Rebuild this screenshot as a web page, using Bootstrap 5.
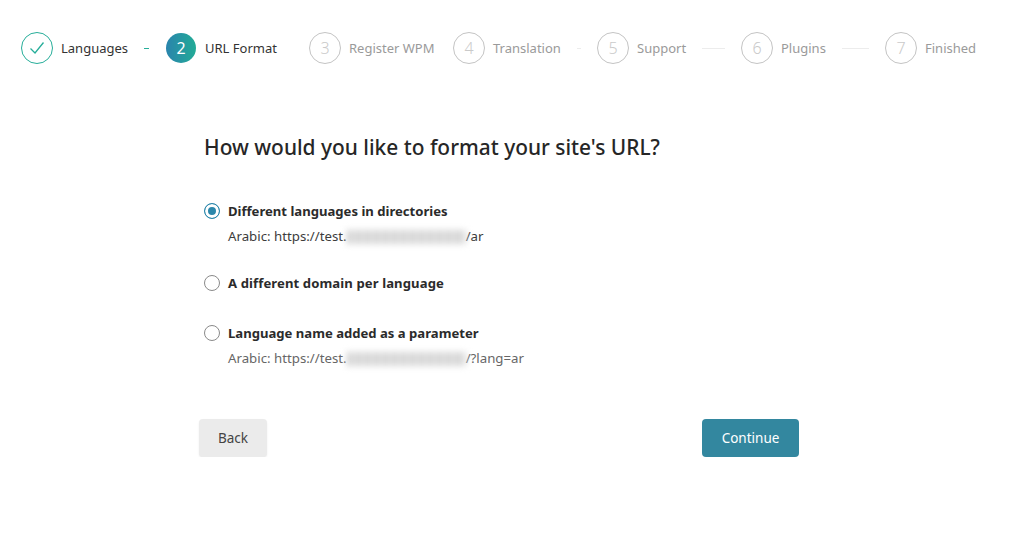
<!DOCTYPE html>
<html lang="en">
<head>
<meta charset="utf-8">
<title>URL Format</title>
<link href="https://cdn.jsdelivr.net/npm/bootstrap@5.3.0/dist/css/bootstrap.min.css" rel="stylesheet">
<style>
html,body{background:#fff;}
body{font-family:"Noto Sans","Open Sans",sans-serif;font-size:14px;color:#2b2b2b;overflow:hidden;}
.stepper{padding:32px 0 0 21px;height:64px;box-sizing:content-box;}
.step-item{flex:0 0 144px;min-width:0;}
.step-item:last-child{flex:0 0 auto;}
.step-dot{flex:0 0 32px;width:32px;height:32px;border-radius:50%;border:1px solid #c4c4c4;color:#cacaca;font-size:16px;font-weight:300;line-height:1;}
.step-done{border-color:#27ae9a;}
.step-now{border-color:transparent;background:linear-gradient(90deg,#2a84ad,#22ab96);background-clip:padding-box;color:#fff;font-weight:400;}
.step-name{margin-left:8px;padding-top:2px;color:#9a9a9a;font-size:13px;white-space:nowrap;}
.step-on{color:#333;}
.step-line{height:1px;background:#ececec;margin:0 16px;min-width:0;}
.line-on{background:#27ae9a;}
.panel{width:600px;margin:0 auto 0 199px;padding-top:35px;}
.panel-title{font-size:20.9px;font-weight:500;color:#262626;margin:0 0 0 5px;line-height:32px;}
.opts{margin:38px 0 0 5px;}
.opt{min-height:0;padding-left:24px;margin:0;}
.opt .form-check-input{width:16px;height:16px;margin:2px 0 0 -24px;border:1px solid #8a8a8a;box-shadow:none;}
.opt .form-check-input:checked{border-color:#2b87ab;background-color:#2b87ab;background-image:none;box-shadow:inset 0 0 0 3px #fff;}
.opt-name{font-weight:700;font-size:13.1px;color:#2b2b2b;line-height:20px;display:block;}
.opt-name-wide{letter-spacing:.1px;}
.opt-desc{font-size:13.25px;color:#3c3c3c;line-height:20px;margin-top:5px;white-space:nowrap;}
.opt-desc-muted{color:#666;}
.opt-gap{margin-top:27px;}
.opt-gap-b{margin-top:30px;}
.smudge{display:inline-block;width:119px;height:14px;vertical-align:-3px;filter:blur(3px);background:repeating-linear-gradient(90deg,#cfcfcf 0 5px,#e8e8e8 5px 9px);}
.actions{margin-top:51px;}
.btn-back,.btn-go{font-size:13.5px;height:38px;padding:0;border:0;border-radius:4px;line-height:38px;}
.btn-back{width:68px;background:#ebebeb;color:#444;box-shadow:0 1px 2px rgba(0,0,0,.08);}
.btn-go{width:97px;background:#33879f;color:#fff;}
.btn-back:hover{background:#e2e2e2;color:#444;}
.btn-go:hover{background:#2d7a90;color:#fff;}
</style>
</head>
<body>
<div class="stepper d-flex align-items-start">
  <div class="step-item d-flex align-items-center">
    <div class="step-dot step-done d-flex align-items-center justify-content-center">
      <svg width="16" height="14" viewBox="0 0 16 14" fill="none" stroke="#27ae9a" stroke-width="1.3"><path d="M1.5 7.5 L6 12 L14.5 1.5"/></svg>
    </div>
    <span class="step-name step-on">Languages</span>
    <div class="step-line line-on flex-grow-1"></div>
  </div>
  <div class="step-item d-flex align-items-center">
    <div class="step-dot step-now d-flex align-items-center justify-content-center">2</div>
    <span class="step-name step-on">URL Format</span>
  </div>
  <div class="step-item d-flex align-items-center">
    <div class="step-dot d-flex align-items-center justify-content-center">3</div>
    <span class="step-name">Register WPM</span>
  </div>
  <div class="step-item d-flex align-items-center">
    <div class="step-dot d-flex align-items-center justify-content-center">4</div>
    <span class="step-name">Translation</span>
    <div class="step-line flex-grow-1"></div>
  </div>
  <div class="step-item d-flex align-items-center">
    <div class="step-dot d-flex align-items-center justify-content-center">5</div>
    <span class="step-name">Support</span>
    <div class="step-line flex-grow-1"></div>
  </div>
  <div class="step-item d-flex align-items-center">
    <div class="step-dot d-flex align-items-center justify-content-center">6</div>
    <span class="step-name">Plugins</span>
    <div class="step-line flex-grow-1"></div>
  </div>
  <div class="step-item d-flex align-items-center">
    <div class="step-dot d-flex align-items-center justify-content-center">7</div>
    <span class="step-name">Finished</span>
  </div>
</div>
<main class="panel">
  <h1 class="panel-title">How would you like to format your site's URL?</h1>
  <div class="opts">
    <div class="form-check opt">
      <input class="form-check-input" type="radio" name="urlfmt" id="o1" checked>
      <label class="form-check-label opt-name" for="o1">Different languages in directories</label>
      <div class="opt-desc">Arabic: https://test.<span class="smudge"></span>/ar</div>
    </div>
    <div class="form-check opt opt-gap">
      <input class="form-check-input" type="radio" name="urlfmt" id="o2">
      <label class="form-check-label opt-name opt-name-wide" for="o2">A different domain per language</label>
    </div>
    <div class="form-check opt opt-gap-b">
      <input class="form-check-input" type="radio" name="urlfmt" id="o3">
      <label class="form-check-label opt-name" for="o3">Language name added as a parameter</label>
      <div class="opt-desc opt-desc-muted">Arabic: https://test.<span class="smudge"></span>/?lang=ar</div>
    </div>
  </div>
  <div class="actions d-flex justify-content-between">
    <button type="button" class="btn btn-back">Back</button>
    <button type="button" class="btn btn-go">Continue</button>
  </div>
</main>
<script src="https://cdn.jsdelivr.net/npm/bootstrap@5.3.0/dist/js/bootstrap.bundle.min.js"></script>
</body>
</html>
